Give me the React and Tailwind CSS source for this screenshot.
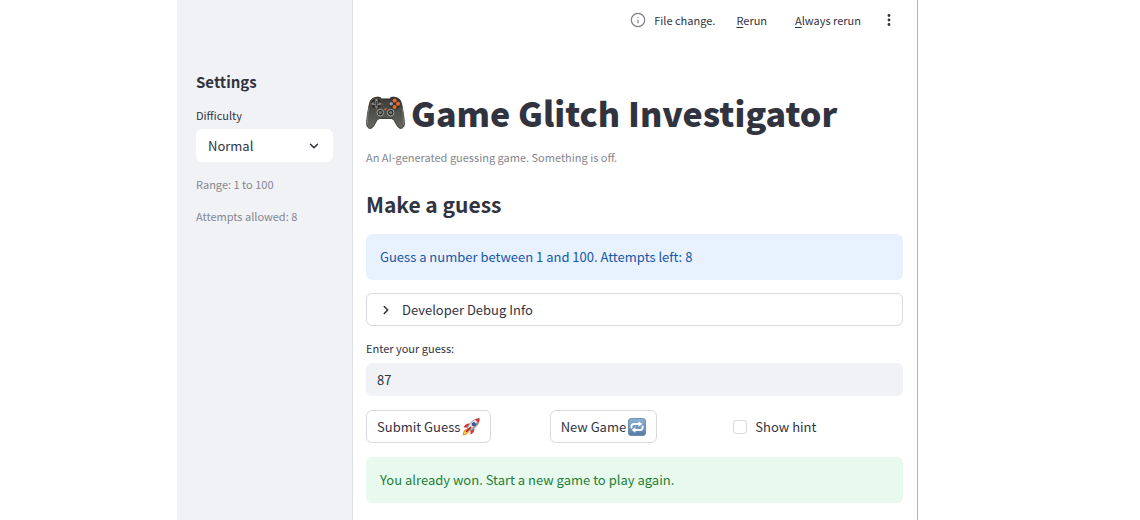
import React, { useState } from 'react';
import { ChevronDown, ChevronRight, Info } from 'lucide-react';

const GamepadIcon = () => (
    <svg viewBox="0 0 39 34" className="h-[34px] w-[39px] shrink-0" role="img" aria-label="Gamepad">
        <defs>
            <linearGradient id="padBody" x1="0" y1="0" x2="0" y2="1">
                <stop offset="0" stopColor="#3a3b39" />
                <stop offset="0.55" stopColor="#51534f" />
                <stop offset="1" stopColor="#666861" />
            </linearGradient>
        </defs>
        <path
            d="M9 1.6 C12 .6 14.4 1.2 15.6 2.9 H23.4 C24.6 1.2 27 .6 30 1.6 C34 2.6 35 5 35.8 9 C37 15 38.4 22 38.3 28 C38.2 31.6 35.5 33.4 33 31.8 C30.6 30 29.8 26.6 28 24.2 C27 22.9 25.6 22.4 24 22.4 H15 C13.4 22.4 12 22.9 11 24.2 C9.2 26.6 8.4 30 6 31.8 C3.5 33.4 .8 31.6 .7 28 C.6 22 2 15 3.2 9 C4 5 5 2.6 9 1.6 Z"
            fill="url(#padBody)"
            stroke="#2b2c2a"
            strokeWidth="0.9"
        />
        <path d="M3 12 C1.8 18 1.2 24 1.6 28.6 M36 12 C37.2 18 37.8 24 37.4 28.6" fill="none" stroke="#85877f" strokeWidth="0.8" />
        <circle cx="10.4" cy="7.8" r="5.8" fill="#30312f" stroke="#74503a" strokeWidth="0.8" />
        <path d="M10.4 4 V11.6 M6.6 7.8 H14.2" stroke="#8f938d" strokeWidth="2.3" strokeLinecap="round" />
        <path d="M10.4 5 V10.6 M7.6 7.8 H13.2" stroke="#41423f" strokeWidth="1.1" />
        <circle cx="28.6" cy="7.8" r="5.8" fill="#353633" />
        <circle cx="28.6" cy="4.6" r="2" fill="#f0672b" />
        <circle cx="32" cy="7.8" r="2" fill="#f0672b" />
        <circle cx="28.6" cy="11" r="2" fill="#f0672b" />
        <circle cx="25.2" cy="7.8" r="1.8" fill="#9a9c98" />
        <circle cx="19.5" cy="13.2" r="1.2" fill="#c75a25" />
        <circle cx="14.3" cy="16.6" r="3.3" fill="#2b2c2a" stroke="#a5a8a4" strokeWidth="1" />
        <circle cx="14.3" cy="16.6" r="1.5" fill="#7c7f7b" />
        <circle cx="24.7" cy="16.6" r="3.3" fill="#2b2c2a" stroke="#a5a8a4" strokeWidth="1" />
        <circle cx="24.7" cy="16.6" r="1.5" fill="#7c7f7b" />
    </svg>
);

const RocketIcon = () => (
    <svg viewBox="0 0 18 18" className="size-[18px] shrink-0" aria-hidden="true">
        <path d="M5.6 10.8 C3 11 1.6 12.6 1.3 14.4 C1.1 15.6 .8 16.4 .4 17.4 C3 17.4 6.2 16.4 7 12.8 Z" fill="#f58a1f" />
        <path d="M5 12 C3.4 12.4 2.4 13.6 1.8 16 C4 15.8 5.6 14.6 6.2 13 Z" fill="#ffe04a" />
        <path d="M7.6 5.6 C5 5.4 2.8 7 1.6 9.6 L5.4 9.4 Z" fill="#d8322a" />
        <path d="M12.4 10.4 C12.6 13 11 15.4 8.4 16.6 L8.6 12.8 Z" fill="#d8322a" />
        <path d="M17.4 .6 C12.6 .6 8.6 3.4 5 9.8 L8.2 13 C14.4 9.6 17.4 5.4 17.4 .6 Z" fill="#dfe4ea" stroke="#59616d" strokeWidth="0.6" />
        <path d="M17.4 .6 C15.8 .6 14.4 .9 13 1.6 L16.4 5 C17.1 3.6 17.4 2.2 17.4 .6 Z" fill="#d8322a" />
        <path d="M7.8 12.6 C13.4 9.4 15.8 6.6 16.6 4.6 L14.8 4.4 C13.4 7.4 10.6 10 7 11.8 Z" fill="#7d8591" />
        <circle cx="11.8" cy="6.2" r="1.7" fill="#2f5f9c" stroke="#3a414c" strokeWidth="0.7" />
        <path d="M4.6 13.4 L8.6 9.4" stroke="#b3241f" strokeWidth="1.5" strokeLinecap="round" />
    </svg>
);

const RepeatIcon = () => (
    <svg viewBox="0 0 18 18" className="size-[18px] shrink-0" aria-hidden="true">
        <defs>
            <linearGradient id="repeatBg" x1="0" y1="0" x2="0" y2="1">
                <stop offset="0" stopColor="#8db4d6" />
                <stop offset="1" stopColor="#557ba3" />
            </linearGradient>
        </defs>
        <rect x="0.5" y="0.5" width="17" height="17" rx="2.6" fill="url(#repeatBg)" stroke="#5d7f9f" strokeWidth="0.8" />
        <path d="M3.4 10.2 V8.6 C3.4 7 4.4 6 6 6 H11.2" fill="none" stroke="#fff" strokeWidth="1.9" />
        <path d="M10.6 3.2 L14.4 6 L10.6 8.8 Z" fill="#fff" />
        <path d="M14.6 7.8 V9.4 C14.6 11 13.6 12 12 12 H6.8" fill="none" stroke="#fff" strokeWidth="1.9" />
        <path d="M7.4 9.2 L3.6 12 L7.4 14.8 Z" fill="#fff" />
    </svg>
);

const Sidebar = () => {
    const [difficulty, setDifficulty] = useState('Normal');

    return (
        <aside className="w-[176px] shrink-0 border-r border-[#dedfe4] bg-[#f0f2f6] px-[19px] pt-[70px]">
            <h2 className="text-[15px] leading-6 font-bold">Settings</h2>
            <label htmlFor="difficulty" className="mt-3 block text-[11px] leading-[18px]">Difficulty</label>
            <div className="relative mt-[5px]">
                <select
                    id="difficulty"
                    value={difficulty}
                    onChange={(e) => setDifficulty(e.target.value)}
                    className="block h-[33px] w-full appearance-none rounded-md bg-white pl-3 pr-8 text-[13px] outline-none"
                >
                    <option>Easy</option>
                    <option>Normal</option>
                    <option>Hard</option>
                </select>
                <ChevronDown size={14} strokeWidth={2.6} className="pointer-events-none absolute right-3 top-[10px]" />
            </div>
            <p className="mt-[13px] text-[11px] leading-[18px] text-[#85868e]">Range: 1 to 100</p>
            <p className="mt-[14px] text-[11px] leading-[18px] text-[#85868e]">Attempts allowed: 8</p>
        </aside>
    );
};

const Toolbar = () => (
    <header className="flex h-10 items-center justify-end pr-[9px] text-[11px] leading-[18px]">
        <Info size={16} strokeWidth={1.8} className="mr-2 text-[#7d7e87]" />
        <span>File change.</span>
        <button type="button" className="ml-[21px]"><span className="underline underline-offset-2">R</span>erun</button>
        <button type="button" className="ml-7"><span className="underline underline-offset-2">A</span>lways rerun</button>
        <button type="button" aria-label="Main menu" className="ml-[23px]">
            <svg viewBox="0 0 10 14" className="h-[14px] w-[10px]" fill="currentColor">
                <circle cx="5" cy="2.5" r="1.4" />
                <circle cx="5" cy="7" r="1.4" />
                <circle cx="5" cy="11.5" r="1.4" />
            </svg>
        </button>
    </header>
);

const App = () => {
    const [guess, setGuess] = useState('87');
    const [showHint, setShowHint] = useState(false);

    return (
        <div className="min-h-screen bg-white pl-[177px] pr-[222px] font-['Noto_Sans_CJK_SC',sans-serif] text-[13px] text-[#31333f]">
            <div className="flex min-h-screen border-r border-[#b4b4b6]">
                <Sidebar />
                <main className="min-w-0 flex-1 pl-[13px] pr-[14px]">
                    <Toolbar />

                    <h1 className="mt-[50px] flex items-center gap-[6px] text-[34px] leading-[46px] font-black whitespace-nowrap">
                        <GamepadIcon />
                        Game Glitch Investigator
                    </h1>
                    <p className="mt-3 text-[11px] leading-[18px] text-[#85868e]">An AI-generated guessing game. Something is off.</p>
                    <h2 className="mt-[22px] text-[21px] leading-8 font-bold">Make a guess</h2>

                    <div role="status" className="mt-[14px] rounded-md bg-[#e8f2ff] px-[14px] py-[13px] leading-5 text-[#1757a6]">
                        Guess a number between 1 and 100. Attempts left: 8
                    </div>

                    <button type="button" aria-expanded="false" className="mt-[13px] flex h-[33px] w-full items-center gap-[9px] rounded-md border border-[#d8d9dd] px-3">
                        <ChevronRight size={14} strokeWidth={2.6} />
                        Developer Debug Info
                    </button>

                    <label htmlFor="guess" className="mt-[13px] block text-[11px] leading-[18px]">Enter your guess:</label>
                    <input
                        id="guess"
                        type="text"
                        value={guess}
                        onChange={(e) => setGuess(e.target.value)}
                        className="mt-[6px] block h-[33px] w-full rounded-md bg-[#f0f2f6] px-[11px] outline-none"
                    />

                    <div className="mt-[14px] grid grid-cols-3 items-center gap-[14px]">
                        <button type="button" className="flex h-[33px] items-center gap-[2px] justify-self-start rounded-md border border-[#d8d9dd] px-[10px] whitespace-nowrap">
                            Submit Guess <RocketIcon />
                        </button>
                        <button type="button" className="flex h-[33px] items-center gap-[2px] justify-self-start rounded-md border border-[#d8d9dd] px-[10px] whitespace-nowrap">
                            New Game <RepeatIcon />
                        </button>
                        <label className="flex items-center gap-2">
                            <input
                                type="checkbox"
                                checked={showHint}
                                onChange={(e) => setShowHint(e.target.checked)}
                                className="size-[14px] appearance-none rounded-[3px] border border-[#d8d9dd] checked:bg-[#ff4b4b]"
                            />
                            Show hint
                        </label>
                    </div>

                    <div role="status" className="mt-[14px] rounded-md bg-[#e8f9ee] px-[14px] py-[13px] leading-5 text-[#1d7f36]">
                        You already won. Start a new game to play again.
                    </div>
                </main>
            </div>
        </div>
    );
};

export default App;
